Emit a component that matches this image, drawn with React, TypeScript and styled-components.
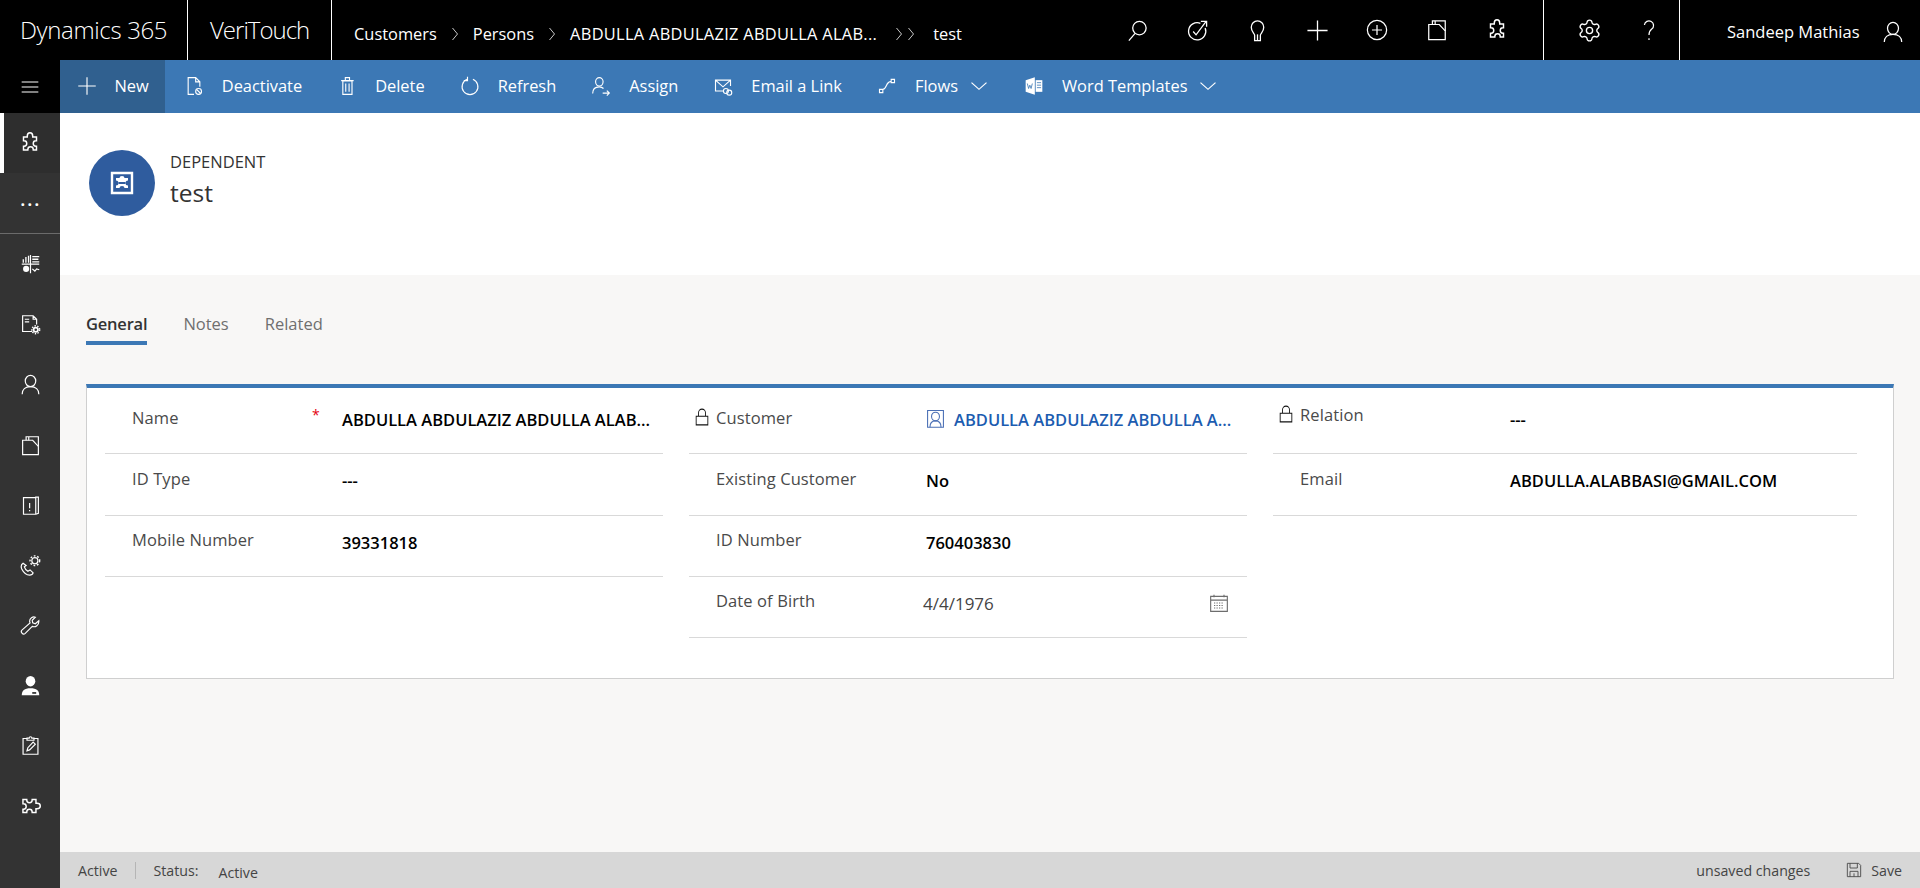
import React from "react";
import styled, { createGlobalStyle } from "styled-components";
import { Settings } from "lucide-react";

const GlobalStyle = createGlobalStyle`
    html, body {
        margin: 0;
        padding: 0;
        height: 100%;
        overflow: hidden;
        background: #f8f7f6;
    }
    * {
        box-sizing: border-box;
    }
    #root {
        height: 100%;
        font-family: "Open Sans", "Noto Sans", "Liberation Sans", sans-serif;
    }
`;

const Page = styled.div`
    height: 888px;
    display: flex;
    flex-direction: column;
`;

const TopBar = styled.header`
    height: 60px;
    flex: none;
    background: #000;
    color: #fff;
    display: flex;
    align-items: stretch;
`;

const Brand = styled.div<{ $width: number; $tight?: boolean }>`
    width: ${(p) => p.$width}px;
    border-right: 1px solid #fff;
    display: flex;
    align-items: center;
    padding-left: ${(p) => (p.$tight ? "22px" : "20px")};
    font-size: 24px;
    font-weight: 300;
    letter-spacing: ${(p) => (p.$tight ? "-1px" : "-0.35px")};
    padding-bottom: 2px;
    white-space: nowrap;
`;

const Crumbs = styled.nav`
    flex: 1;
    display: flex;
    align-items: center;
    padding: 7px 0 0 22px;
    font-size: 16.4px;
    white-space: nowrap;
`;

const CrumbGap = styled.span<{ $wide?: boolean }>`
    width: ${(p) => (p.$wide ? "56px" : "36px")};
    display: flex;
    justify-content: center;
`;

const LongCrumb = styled.span`
    letter-spacing: 0.3px;
`;

const TopIcons = styled.div<{ $divided?: boolean }>`
    display: flex;
    align-items: center;
    ${(p) => (p.$divided ? "border-right: 1px solid #fff; padding-left: 15px;" : "margin-right: 16px;")}
    ${(p) => (p.$divided ? "border-left: 1px solid #fff;" : "")}
`;

const TopIcon = styled.span`
    width: 60px;
    display: flex;
    justify-content: center;
`;

const UserBlock = styled.div`
    width: 240px;
    display: flex;
    align-items: center;
    padding: 3px 0 0 47px;
    gap: 22px;
    font-size: 16.5px;
    white-space: nowrap;
`;

const Shell = styled.div`
    flex: 1;
    display: flex;
    min-height: 0;
`;

const Sidebar = styled.aside`
    width: 60px;
    flex: none;
    background: #333;
    color: #fff;
    display: flex;
    flex-direction: column;
`;

const MenuButton = styled.div`
    height: 53px;
    background: #000;
    display: flex;
    align-items: center;
    justify-content: center;
`;

const SideItem = styled.div<{ $active?: boolean }>`
    height: 60.2px;
    flex: none;
    display: flex;
    align-items: center;
    justify-content: center;
    background: ${(p) => (p.$active ? "#2e2e2e" : "transparent")};
    border-left: ${(p) => (p.$active ? "4px solid #fff" : "0")};
    padding-right: ${(p) => (p.$active ? "4px" : "0")};
`;

const MoreDots = styled.span`
    font-size: 16px;
    font-weight: 700;
    letter-spacing: 2.5px;
    margin-bottom: 6px;
    margin-left: 2px;
`;

const SideRule = styled.hr`
    margin: 0 0 0;
    border: 0;
    border-top: 1px solid #6b6b6b;
`;

const Main = styled.main`
    flex: 1;
    min-width: 0;
    display: flex;
    flex-direction: column;
`;

const Ribbon = styled.div`
    height: 53px;
    flex: none;
    background: #3c78b5;
    color: #fff;
    display: flex;
    align-items: stretch;
`;

const RibbonItem = styled.div<{ $active?: boolean }>`
    display: flex;
    align-items: center;
    gap: 18px;
    padding: 0 16.5px 2px;
    font-size: 16.4px;
    margin-right: 2px;
    white-space: nowrap;
    background: ${(p) => (p.$active ? "#30608f" : "transparent")};
`;

const Caret = styled.span`
    margin-left: -7px;
    display: flex;
`;

const RecordHeader = styled.section`
    height: 162px;
    flex: none;
    background: #fff;
    display: flex;
    align-items: flex-start;
    gap: 15px;
    padding: 37px 0 0 29px;
`;

const Avatar = styled.div`
    width: 66px;
    height: 66px;
    border-radius: 50%;
    background: #2f5c9e;
    color: #fff;
    display: flex;
    align-items: center;
    justify-content: center;
`;

const RecordTitles = styled.div`
    display: flex;
    flex-direction: column;
    color: #333;
`;

const EntityName = styled.span`
    font-size: 16.5px;
    line-height: 20px;
    margin-top: 2px;
`;

const RecordName = styled.span`
    font-size: 24.5px;
    line-height: 32px;
    margin-top: 5px;
`;

const Content = styled.div`
    flex: 1;
    background: #f8f7f6;
    padding: 35px 26px 0;
`;

const Tabs = styled.div`
    display: flex;
    gap: 36px;
`;

const Tab = styled.div<{ $active?: boolean }>`
    height: 35px;
    padding-top: 2px;
    font-size: 16.5px;
    color: ${(p) => (p.$active ? "#333" : "#6f6f6f")};
    font-weight: ${(p) => (p.$active ? 600 : 400)};
    letter-spacing: ${(p) => (p.$active ? "-0.2px" : "0")};
    border-bottom: ${(p) => (p.$active ? "4px solid #3c78b5" : "0")};
`;

const Card = styled.div`
    margin-top: 39px;
    height: 295px;
    background: #fff;
    border: 1px solid #cfcfcf;
    border-top: 4px solid #3c78b5;
    padding: 5px 36px 0 18px;
    display: grid;
    grid-template-columns: 558px 558px 584px;
    column-gap: 26px;
    align-items: start;
`;

const Column = styled.div`
    display: flex;
    flex-direction: column;
`;

const Field = styled.div`
    height: 61.3px;
    display: grid;
    grid-template-columns: 237px 1fr;
    border-bottom: 1px solid #d9d9d9;
`;

const LabelCell = styled.div<{ $locked?: boolean; $lift?: boolean }>`
    position: relative;
    padding: ${(p) => (p.$lift ? "11px" : "13.5px")} 0 0 ${(p) => (p.$locked ? "6px" : "27px")};
    display: flex;
    align-items: flex-start;
    gap: 7px;
    font-size: 16.5px;
    line-height: 22px;
    letter-spacing: 0.1px;
    color: #4a4a4a;
`;

const Required = styled.span`
    position: absolute;
    left: 207px;
    top: 11px;
    color: #e3000f;
    font-size: 14px;
`;

const Value = styled.div<{ $muted?: boolean; $link?: boolean }>`
    padding-top: 16px;
    display: flex;
    align-items: flex-start;
    gap: 9px;
    font-size: 16.5px;
    line-height: 22px;
    white-space: nowrap;
    font-weight: ${(p) => (p.$muted ? 400 : 600)};
    color: ${(p) => (p.$link ? "#1c5cb0" : p.$muted ? "#444" : "#000")};
`;

const DateValue = styled(Value)`
    margin-left: -3px;
    justify-content: space-between;
    padding-right: 18px;
    font-size: 17px;
`;

const StatusBar = styled.footer`
    height: 36px;
    flex: none;
    background: #d7d7d7;
    color: #444;
    display: flex;
    align-items: center;
    font-size: 14.2px;
    padding: 0 18px 0 18px;
`;

const StatusRule = styled.span`
    width: 1px;
    height: 17px;
    background: #b5b5b5;
    margin: 0 17px 0 18px;
`;

const StatusValue = styled.span`
    margin: 4px 0 0 20px;
`;

const StatusSpacer = styled.div`
    flex: 1;
`;

const SaveButton = styled.span`
    display: flex;
    align-items: center;
    gap: 9px;
    margin-left: 36px;
`;

const Glyph = styled.svg`
    display: block;
    flex: none;
    fill: none;
    stroke: currentColor;
    stroke-width: 1.35;
`;

const LockGlyph = styled(Glyph)`
    color: #111;
    margin-top: 1px;
    stroke-width: 1.5;
`;

const paths: Record<string, React.ReactNode> = {
    search: (
        <>
            <circle cx="14" cy="9.500" r="7" />
            <path d="M9.500 15 3 22.500" />
        </>
    ),
    task: (
        <>
            <path d="M15 4.500a9 9 0 1 0 5 5" />
            <path d="M7.500 13l3 3.500L21 2.500M15.500 2.500H21.500V8" />
        </>
    ),
    bulb: (
        <>
            <path d="M9 22.500h6V17c0-2 3.500-3.500 3.500-8.500a6.500 6.500 0 0 0-13 0C5.500 13.500 9 15 9 17z" />
            <path d="M12 16v6" />
        </>
    ),
    plus: <path d="M12 1.500v21M1.500 12h21" />,
    circlePlus: (
        <>
            <circle cx="12" cy="12" r="10.500" />
            <path d="M12 6.500v11M6.500 12h11" />
        </>
    ),
    record: (
        <>
            <path d="M3 6v16.500h18V13l-6.500-7z" />
            <path d="M7 6V2h14v11M10 2v4" />
        </>
    ),
    puzzle: (
        <path d="M9.500 6.500V5.500a2.500 3 0 0 1 5 0v1h3.500v3.500h-.5a2.500 2.500 0 0 0 0 5h.5v3.500h-3v-.5a2.500 2.500 0 0 0-5 0v.5H6V15h.5a2.500 2.500 0 0 0 0-5H6V6.500z" />
    ),
    help: <path d="M7 6.500a5 5 0 1 1 8 4.500c-2 1.500-3 3-3 6.500M12 21v2" />,
    user: (
        <>
            <ellipse cx="12" cy="8" rx="6" ry="6.500" />
            <path d="M2.500 23c0-5 3.500-8.500 9.500-8.500s9.500 3.500 9.500 8.500" />
        </>
    ),
    menu: <path d="M2 6h20M2 12h20M2 18h20" />,
    deactivate: (
        <>
            <path d="M12 22H5V2h9l5 5v6M14 2v5h5" />
            <circle cx="17.500" cy="18.500" r="3.500" />
            <path d="M15 16l5 5" />
        </>
    ),
    trash: <path d="M7 6v16h11V6zM5 5.500h15M10 5V2h5v3M10.500 9v10M14.500 9v10" />,
    refresh: <path d="M15.500 4a9.500 9.500 0 1 1-7 0M9 1v4.500H4.500" />,
    assign: (
        <>
            <ellipse cx="10" cy="7" rx="4.500" ry="5" />
            <path d="M2 21c0-4.500 2.500-8 8-8 2 0 3.500.5 5 2M14 20.500h8M19 17.500l3 3-3 3" />
        </>
    ),
    email: (
        <>
            <path d="M12 18H3V5h18v7M3 5l9 8 9-8" />
            <circle cx="15.500" cy="18" r="3" />
            <circle cx="19.500" cy="20" r="3" />
        </>
    ),
    flows: <path d="M3 16h4v4H3zM17 4h4v4h-4zM7 16c5 0 3-9 10-9.500" />,
    chevron: <path d="M3 7l9 10 9-10" />,
    chevronRight: <path d="M7 3l10 9-10 9" />,
    word: (
        <>
            <path d="M2 5l11-3.500v21L2 19z" fill="#fff" stroke="none" />
            <path d="M14 5h8v14h-8" fill="#fff" stroke="none" />
            <path d="M4 9l1.500 6 1.500-4 1.500 4L10 9" stroke="#3c78b5" strokeWidth="1" />
            <path d="M15.500 8h5M15.500 11h5M15.500 14h5" stroke="#3c78b5" strokeWidth="1" />
        </>
    ),
    lock: <path d="M2 11h20v11.500H2zM6 11V6.500a6 5 0 0 1 12 0V11" />,
    contact: (
        <>
            <path d="M2 2h20v21H2z" stroke="#4a6fb5" />
            <ellipse cx="12" cy="9.500" rx="5" ry="5.500" stroke="#4a6fb5" />
            <path d="M5 23c0-5 3-8 7-8s7 3 7 8" stroke="#4a6fb5" />
        </>
    ),
    calendar: (
        <>
            <path d="M2 4h20v18H2zM2 8.500h20M6 2v3M18 2v3" stroke="#6d6d6d" />
            <path d="M6 12h12M6 15h12M6 18h12" stroke="#6d6d6d" strokeDasharray="1.500 1.500" />
        </>
    ),
    save: (
        <>
            <path d="M2 2h17l3 3v17H2z" stroke="#4a4a4a" />
            <path d="M6 2v7h11V2M6 22v-8h12v8M12 17v5" stroke="#4a4a4a" />
        </>
    ),
    entity: (
        <>
            <path d="M2 2h20v20H2z" stroke="#fff" strokeWidth="2.400" />
            <path
                d="M9.500 7a2.500 2 0 0 1 5 0h3.500v2.500a2.500 2.500 0 0 0 0 5V17h-3.500a2.500 2 0 0 0-5 0H6v-2.500a2.500 2.500 0 0 0 0-5V7z"
                fill="#fff"
                stroke="none"
            />
            <path d="M8.500 12h7" stroke="#2f5c9e" strokeWidth="2" />
        </>
    ),
    charts: (
        <>
            <path d="M2 11.500h20M12 1v21" />
            <path d="M3 10V6h1.500v4zM6 10V3.500h1.500V10zM9 10V2h1.500v8z" fill="#fff" stroke="none" />
            <path d="M14 3h8M14 6h7M14 9h8" strokeWidth="1.600" />
            <circle cx="7" cy="17" r="3.500" fill="#fff" stroke="none" />
            <path d="M14 17l3 2.500 2-2.500 3 1" />
        </>
    ),
    pageGear: (
        <>
            <path d="M14 20H3V2h12l4 4v6M15 2v4h4M5.500 6h5M5.500 9h5" />
            <circle cx="18" cy="18" r="2.500" strokeWidth="2" />
            <circle cx="18" cy="18" r="4.500" strokeDasharray="1.600 1.600" strokeWidth="1.600" />
        </>
    ),
    alert: (
        <>
            <path d="M4 3h14v19H4zM18 5V2.500h3V21l-3 1" />
            <path d="M11 9v6M11 17v1.500" />
        </>
    ),
    phoneGear: (
        <>
            <path d="M3.500 9.500c-2.500 1.500-2.500 4-1.500 6.500 2 4 5.500 7 9 7 2.500 0 3.500-1 4-2.500l-3.500-3.500-2.500 1.500c-1.500-1-3.500-3-4-5l2-1.500z" />
            <circle cx="17" cy="6.500" r="3.500" />
            <circle cx="17" cy="6.500" r="5.500" strokeDasharray="2 2" strokeWidth="1.600" />
        </>
    ),
    wrench: (
        <path d="M21.500 6.500l-4 3.500-3-1-.5-3 3.500-3.500c-3-1-6.500 1-6.500 4.500 0 1 .2 1.500.5 2L2.500 17a2.500 2.500 0 0 0 3.500 4l8-8c3.500 1.500 8-1.500 7.500-6.500z" />
    ),
    agent: (
        <>
            <ellipse cx="12" cy="7" rx="5.500" ry="6" fill="#fff" stroke="none" />
            <path d="M2 23c0-5 3-8 10-8s10 3 10 8z" fill="#fff" stroke="none" />
            <path d="M14 19.500h4.500v2H14z" fill="#333" stroke="none" />
        </>
    ),
    clipboard: (
        <>
            <path d="M8 4H3.500v18h17V4H16M8 6V3.500h2.500a1.500 1.500 0 0 1 3 0H16V6z" />
            <path d="M8 18l1-3.500L15 8l2.500 2.500L11 17z" />
        </>
    ),
};

const Icon = ({ name, size = 20, width }: { name: string; size?: number; width?: number }) => (
    <Glyph width={width ?? size} height={size} viewBox="0 0 24 24" preserveAspectRatio="none">
        {paths[name]}
    </Glyph>
);

const Puzzle = ({ sideways, size = 26 }: { sideways?: boolean; size?: number }) => (
    <Glyph
        width={size}
        height={size}
        viewBox="0 0 24 24"
        strokeWidth={1.4}
        transform={sideways ? "rotate(90)" : undefined}
    >
        {paths.puzzle}
    </Glyph>
);

const ribbonItems = [
    { icon: "deactivate", label: "Deactivate" },
    { icon: "trash", label: "Delete" },
    { icon: "refresh", label: "Refresh" },
    { icon: "assign", label: "Assign" },
    { icon: "email", label: "Email a Link" },
    { icon: "flows", label: "Flows", caret: true },
    { icon: "word", label: "Word Templates", caret: true },
];

const sideIcons = ["charts", "pageGear", "user", "record", "alert", "phoneGear", "wrench", "agent", "clipboard"];

const Lock = () => (
    <LockGlyph width={14} height={18} viewBox="0 0 24 24" preserveAspectRatio="none">
        {paths.lock}
    </LockGlyph>
);

export default function App() {
    return (
        <Page>
            <GlobalStyle />
            <TopBar>
                <Brand $width={188}>Dynamics 365</Brand>
                <Brand $width={144} $tight>VeriTouch</Brand>
                <Crumbs>
                    Customers
                    <CrumbGap>
                        <Icon name="chevronRight" size={16} width={12} />
                    </CrumbGap>
                    Persons
                    <CrumbGap>
                        <Icon name="chevronRight" size={16} width={12} />
                    </CrumbGap>
                    <LongCrumb>ABDULLA ABDULAZIZ ABDULLA ALAB...</LongCrumb>
                    <CrumbGap $wide>
                        <Icon name="chevronRight" size={16} width={12} />
                        <Icon name="chevronRight" size={16} width={12} />
                    </CrumbGap>
                    test
                </Crumbs>
                <TopIcons>
                    <TopIcon><Icon name="search" size={23} /></TopIcon>
                    <TopIcon><Icon name="task" size={23} /></TopIcon>
                    <TopIcon><Icon name="bulb" size={23} /></TopIcon>
                    <TopIcon><Icon name="plus" size={23} /></TopIcon>
                    <TopIcon><Icon name="circlePlus" size={22} /></TopIcon>
                    <TopIcon><Icon name="record" size={22} /></TopIcon>
                    <TopIcon><Puzzle /></TopIcon>
                </TopIcons>
                <TopIcons $divided>
                    <TopIcon><Settings size={25} strokeWidth={1.3} /></TopIcon>
                    <TopIcon><Icon name="help" size={22} /></TopIcon>
                </TopIcons>
                <UserBlock>
                    Sandeep Mathias
                    <Icon name="user" size={22} />
                </UserBlock>
            </TopBar>
            <Shell>
                <Sidebar>
                    <MenuButton>
                        <Icon name="menu" size={20} />
                    </MenuButton>
                    <SideItem $active>
                        <Puzzle />
                    </SideItem>
                    <SideItem>
                        <MoreDots>...</MoreDots>
                    </SideItem>
                    <SideRule />
                    {sideIcons.map((name) => (
                        <SideItem key={name}>
                            <Icon name={name} size={21} />
                        </SideItem>
                    ))}
                    <SideItem>
                        <Puzzle sideways />
                    </SideItem>
                </Sidebar>
                <Main>
                    <Ribbon>
                        <RibbonItem $active>
                            <Icon name="plus" size={20} />
                            New
                        </RibbonItem>
                        {ribbonItems.map((item) => (
                            <RibbonItem key={item.label}>
                                <Icon name={item.icon} size={20} />
                                {item.label}
                                {item.caret && (
                                    <Caret>
                                        <Icon name="chevron" size={16} width={20} />
                                    </Caret>
                                )}
                            </RibbonItem>
                        ))}
                    </Ribbon>
                    <RecordHeader>
                        <Avatar>
                            <Icon name="entity" size={24} />
                        </Avatar>
                        <RecordTitles>
                            <EntityName>DEPENDENT</EntityName>
                            <RecordName>test</RecordName>
                        </RecordTitles>
                    </RecordHeader>
                    <Content>
                        <Tabs>
                            <Tab $active>General</Tab>
                            <Tab>Notes</Tab>
                            <Tab>Related</Tab>
                        </Tabs>
                        <Card>
                            <Column>
                                <Field>
                                    <LabelCell>
                                        Name
                                        <Required>*</Required>
                                    </LabelCell>
                                    <Value>ABDULLA ABDULAZIZ ABDULLA ALAB...</Value>
                                </Field>
                                <Field>
                                    <LabelCell>ID Type</LabelCell>
                                    <Value>---</Value>
                                </Field>
                                <Field>
                                    <LabelCell>Mobile Number</LabelCell>
                                    <Value>39331818</Value>
                                </Field>
                            </Column>
                            <Column>
                                <Field>
                                    <LabelCell $locked>
                                        <Lock />
                                        Customer
                                    </LabelCell>
                                    <Value $link>
                                        <Icon name="contact" size={19} />
                                        ABDULLA ABDULAZIZ ABDULLA A...
                                    </Value>
                                </Field>
                                <Field>
                                    <LabelCell>Existing Customer</LabelCell>
                                    <Value>No</Value>
                                </Field>
                                <Field>
                                    <LabelCell>ID Number</LabelCell>
                                    <Value>760403830</Value>
                                </Field>
                                <Field>
                                    <LabelCell>Date of Birth</LabelCell>
                                    <DateValue $muted>
                                        4/4/1976
                                        <Icon name="calendar" size={20} />
                                    </DateValue>
                                </Field>
                            </Column>
                            <Column>
                                <Field>
                                    <LabelCell $locked $lift>
                                        <Lock />
                                        Relation
                                    </LabelCell>
                                    <Value>---</Value>
                                </Field>
                                <Field>
                                    <LabelCell>Email</LabelCell>
                                    <Value>ABDULLA.ALABBASI@GMAIL.COM</Value>
                                </Field>
                            </Column>
                        </Card>
                    </Content>
                    <StatusBar>
                        Active
                        <StatusRule />
                        Status:
                        <StatusValue>Active</StatusValue>
                        <StatusSpacer />
                        unsaved changes
                        <SaveButton>
                            <Icon name="save" size={16} />
                            Save
                        </SaveButton>
                    </StatusBar>
                </Main>
            </Shell>
        </Page>
    );
}
